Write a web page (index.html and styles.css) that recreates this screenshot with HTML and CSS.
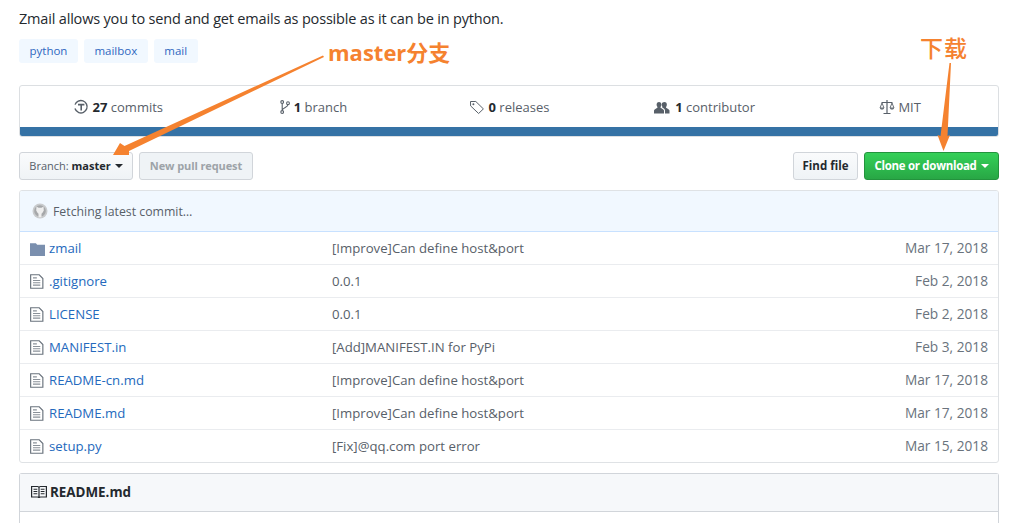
FILE: index.html
```html
<!DOCTYPE html>
<html lang="en">
<head>
<meta charset="utf-8">
<title>zmail</title>
<link rel="stylesheet" href="styles.css">
</head>
<body>
<main class="page">
  <p class="desc">Zmail allows you to send and get emails as possible as it can be in python.</p>
  <div class="topics">
    <a class="topic">python</a><a class="topic">mailbox</a><a class="topic">mail</a>
  </div>
  <section class="summary">
    <div class="stats">
      <div class="stat"><svg class="ico" viewBox="0 0 16 16"><circle cx="8.2" cy="8.2" r="6.2" fill="none" stroke="#586069" stroke-width="1.4" stroke-dasharray="34 5" transform="rotate(200 8 8)"/><path d="M5 5.6h6.4M8.2 5.6v6" fill="none" stroke="#586069" stroke-width="1.6"/></svg><b>27</b> commits</div>
      <div class="stat"><svg class="ico ico-narrow" viewBox="0 0 10 16"><circle cx="2.2" cy="3" r="1.4" fill="none" stroke="#586069" stroke-width="1.1"/><circle cx="2.2" cy="13" r="1.4" fill="none" stroke="#586069" stroke-width="1.1"/><circle cx="8" cy="4.2" r="1.4" fill="none" stroke="#586069" stroke-width="1.1"/><path d="M2.2 4.4v7.2M8 5.6c0 3-5.8 2.6-5.8 6" fill="none" stroke="#586069" stroke-width="1.1"/></svg><b>1</b> branch</div>
      <div class="stat"><svg class="ico" viewBox="0 0 16 16"><path d="M1.5 2.5h5.3l7.6 7.4-4.8 4.6-8-7.6z" fill="none" stroke="#586069" stroke-width="1"/><circle cx="4.4" cy="5.2" r="1" fill="#586069"/></svg><b>0</b> releases</div>
      <div class="stat"><svg class="ico ico-wide" viewBox="0 0 16 13"><path d="M0 12.5V9.6c0-1.4 2.6-2 3.4-2.8.3-.5-.1-.8-.5-1.7C2.500 4 2.300 1 5 1s2.600 3 2.100 4.100c-.4.900-.8 1.200-.5 1.700C7.400 7.600 10 8.200 10 9.600v2.900z" fill="#586069"/><path d="M11 12.500V9.600c0-1.500-1.500-2.300-2.900-3 .4-.4.300-.7-.1-1.500C7.500 4 7.300 1 10.500 1c2.700 0 2.600 3 2.100 4.100-.4.900-.8 1.200-.5 1.700.8.800 3.400 1.400 3.400 2.800v2.900z" fill="#586069"/></svg><b>1</b> contributor</div>
      <div class="stat"><svg class="ico" viewBox="0 0 16 16"><path d="M8 1v13M4.500 14.500h7M2.500 3.500h11" fill="none" stroke="#586069" stroke-width="1.200"/><path d="M3 4 1 9h4zM13 4l-2 5h4z" fill="none" stroke="#586069" stroke-width=".9"/><path d="M.8 9.300c.6 1.600 3.800 1.600 4.400 0zM10.800 9.300c.6 1.600 3.800 1.600 4.400 0z" fill="#586069"/></svg>MIT</div>
    </div>
    <div class="langbar"></div>
  </section>
  <div class="toolbar">
    <button class="btn btn-branch">Branch: <b>master</b><span class="caret"></span></button>
    <button class="btn btn-disabled">New pull request</button>
    <span class="spacer"></span>
    <button class="btn btn-find">Find file</button>
    <button class="btn btn-green">Clone or download<span class="caret"></span></button>
  </div>
  <section class="files">
    <div class="commit"><svg class="avatar" viewBox="0 0 16 16"><circle cx="8" cy="8" r="7.500" fill="#c9cbcd"/><circle cx="8" cy="8" r="5.800" fill="#a6a8aa"/><path d="M4.500 3.500l2 1.200h3l2-1.200.3 4-1.300 2.300-1 1v3.500h-3v-3.500l-1-1-1.300-2.300z" fill="#eeeeee"/></svg>Fetching latest commit…</div>
    <div class="row"><svg class="fico" viewBox="0 0 14 14"><path d="M0 2h5.500l1.200 1.500H14V14H0z" fill="#7a8fae"/></svg><a class="name">zmail</a><span class="msg">[Improve]Can define host&amp;port</span><span class="age">Mar 17, 2018</span></div>
    <div class="row"><svg class="fico" viewBox="0 0 14 14"><use href="#doc"/></svg><a class="name">.gitignore</a><span class="msg">0.0.1</span><span class="age">Feb 2, 2018</span></div>
    <div class="row"><svg class="fico" viewBox="0 0 14 14"><use href="#doc"/></svg><a class="name">LICENSE</a><span class="msg">0.0.1</span><span class="age">Feb 2, 2018</span></div>
    <div class="row"><svg class="fico" viewBox="0 0 14 14"><use href="#doc"/></svg><a class="name">MANIFEST.in</a><span class="msg">[Add]MANIFEST.IN for PyPi</span><span class="age">Feb 3, 2018</span></div>
    <div class="row"><svg class="fico" viewBox="0 0 14 14"><use href="#doc"/></svg><a class="name">README-cn.md</a><span class="msg">[Improve]Can define host&amp;port</span><span class="age">Mar 17, 2018</span></div>
    <div class="row"><svg class="fico" viewBox="0 0 14 14"><use href="#doc"/></svg><a class="name">README.md</a><span class="msg">[Improve]Can define host&amp;port</span><span class="age">Mar 17, 2018</span></div>
    <div class="row"><svg class="fico" viewBox="0 0 14 14"><use href="#doc"/></svg><a class="name">setup.py</a><span class="msg">[Fix]@qq.com port error</span><span class="age">Mar 15, 2018</span></div>
  </section>
  <section class="readme">
    <div class="readme-head"><svg class="book" viewBox="0 0 16 14"><path d="M.6 1.500h5.900c.8 0 1.500.5 1.500 1.200C8 2 8.700 1.500 9.500 1.500h5.900v10.500H9.500c-.8 0-1.500.4-1.500 1-.0-.6-.7-1-1.500-1H.6zM8 2.700V13" fill="none" stroke="#24292e" stroke-width="1.200"/><path d="M2.500 4.300h3.800M2.500 6.500h3.800M2.500 8.700h3.800M9.700 4.300h3.800M9.700 6.500h3.800M9.700 8.700h3.800" stroke="#24292e" stroke-width="1.100"/></svg>README.md</div>
  </section>
</main>

<svg class="defs" width="0" height="0"><defs><g id="doc"><path d="M.6 .7h8L12 4.300v9H.6z" fill="none" stroke="#6a737d" stroke-width="1.100"/><path d="M2.800 6h6.800M2.800 8.200h6.800M2.800 10.400h6.800M2.800 3.600h3.600" stroke="#8a9199" stroke-width="1"/></g></defs></svg>

<svg class="notes" viewBox="0 0 1029 523" width="1029" height="523">
  <path d="M323 55.500 L324 57 L129 151 L129 155 L113 155 L120 143 L124.500 146 Z" fill="#f5822f"/>
  <path d="M949.500 63 L951 63 L947.500 136 L950 135 L943.500 151 L937.500 135 L940.500 136 Z" fill="#f5822f"/>
</svg>
<span class="note note-master">master分支</span>
<span class="note note-down">下载</span>
</body>
</html>
```
FILE: styles.css
```css
* { box-sizing: border-box; }
html, body { margin: 0; height: 523px; overflow: hidden; background: #fff; }
body {
  position: relative;
  font-family: "Open Sans", "Noto Sans CJK SC", sans-serif;
  font-size: 13px;
  color: #24292e;
}
.page { padding: 9px 30px 0 19px; }
.desc { margin: 0; font-size: 14.5px; line-height: 20px; letter-spacing: -.18px; color: #24292e; }
.topics { display: flex; gap: 6px; margin-top: 10px; }
.topic {
  height: 24px; padding: 0 10.5px; background: #f1f8ff; border-radius: 3px;
  color: #2f67c0; font-size: 11.5px; line-height: 24px;
}
.summary { margin-top: 22px; border: 1px solid #dcdfe2; border-radius: 3px; overflow: hidden; }
.stats { display: flex; height: 41px; padding-top: 1px; }
.stat {
  flex: 1; display: flex; align-items: center; justify-content: center;
  font-size: 13px; color: #586069; white-space: pre;
}
.stat b { color: #24292e; margin-left: 1px; }
.ico { width: 16px; height: 16px; margin-right: 3px; flex: none; }
.ico-narrow { width: 10px; }
.ico-wide { width: 16px; height: 13px; margin-right: 4px; }
.langbar { height: 9px; background: #3572a5; }
.toolbar { display: flex; gap: 6px; margin-top: 15px; height: 28px; }
.spacer { flex: 1; }
.btn {
  height: 28px; padding: 0 10px; border: 1px solid #d1d5da; border-radius: 3px;
  background: linear-gradient(#fafbfc, #eff3f6); color: #586069;
  font: 11px/26px "Open Sans", sans-serif; white-space: pre;
}
.btn b { color: #24292e; }
.caret {
  display: inline-block; margin-left: 4px; vertical-align: 2px;
  border: 4px solid transparent; border-top-color: currentColor; border-bottom: 0;
}
.btn .caret { color: #24292e; }
.btn-branch { width: 114px; padding: 0; }
.btn-disabled { color: #9da3a8; font-weight: 700; background: #eff3f6; width: 114px; padding: 0; letter-spacing: -.1px; }
.btn-find { color: #24292e; font-weight: 700; font-size: 11.5px; width: 65px; padding: 0; }
.btn-green {
  width: 135px; padding: 0; color: #fff; font-weight: 700; font-size: 11.5px; letter-spacing: -.3px;
  background: linear-gradient(#34d058, #28a745); border-color: #23933d;
}
.btn-green .caret { color: #fff; }
.files { margin-top: 10px; border: 1px solid #dfe2e5; border-radius: 3px; overflow: hidden; }
.commit {
  display: flex; align-items: center; height: 41px; padding-left: 12px;
  background: #f1f8ff; border-bottom: 1px solid #c8e1ff; color: #586069; font-size: 12.3px;
}
.avatar { width: 16px; height: 16px; margin-right: 5px; }
.row {
  display: flex; align-items: center; height: 33px; padding: 0 10px;
  border-bottom: 1px solid #eaecef; font-size: 13.2px;
}
.row:last-child { border-bottom: 0; height: 32px; }
.fico { width: 15px; height: 15px; margin-right: 4px; flex: none; }
.name { width: 283px; color: #2469bd; flex: none; }
.msg { flex: 1; color: #586069; }
.age { color: #6a737d; font-size: 13.7px; padding-bottom: 2px; }
.readme { margin-top: 10px; border: 1px solid #d1d5da; border-bottom: 0; border-radius: 3px 3px 0 0; height: 50px; }
.readme-head {
  display: flex; align-items: center; height: 38px; padding: 0 0 1px 11px;
  background: #f6f8fa; border-bottom: 1px solid #d1d5da;
  font-size: 13.4px; font-weight: 700; color: #24292e;
}
.book { width: 16px; height: 14px; margin-right: 3px; }
.defs { position: absolute; }
.notes { position: absolute; left: 0; top: 0; pointer-events: none; }
.note { position: absolute; color: #f5822f; font-weight: 700; font-size: 22px; line-height: 28px; white-space: nowrap; }
.note-master { left: 328px; top: 38px; }
.note-down { left: 920px; top: 34px; font-weight: 500; font-size: 23px; letter-spacing: 1px; }
```
